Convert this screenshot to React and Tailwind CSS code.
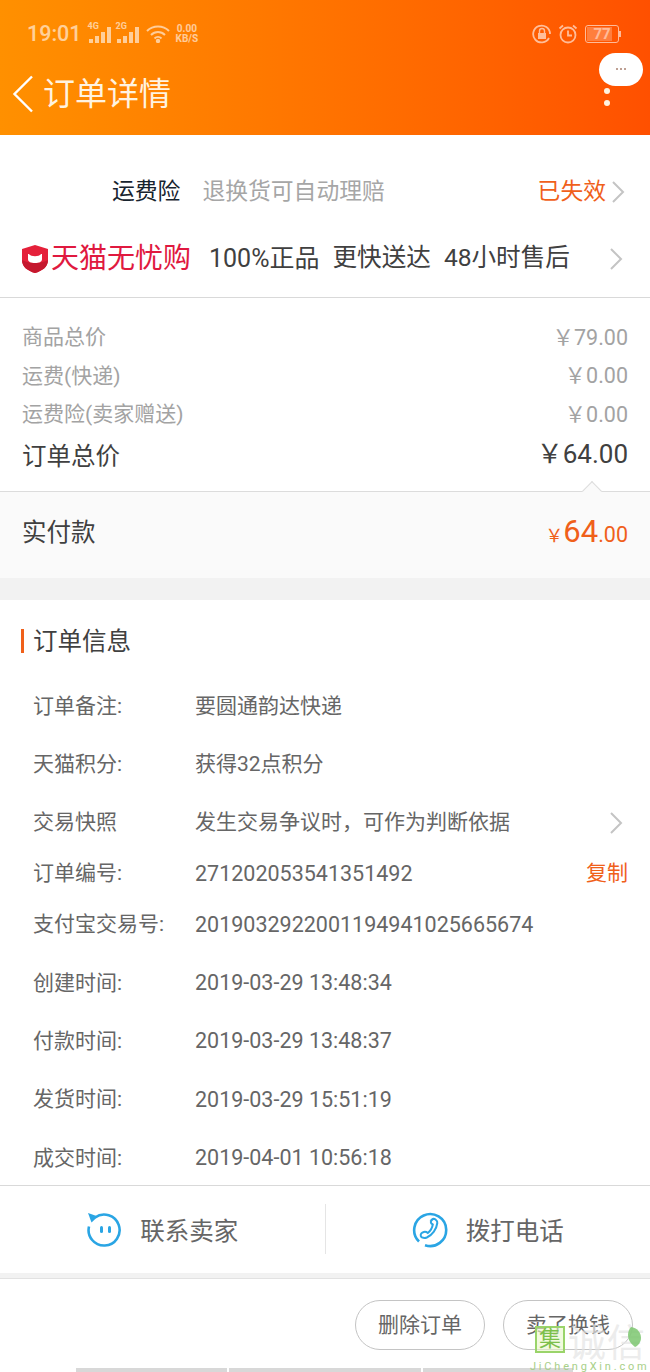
import React from 'react'

const font = { fontFamily: 'Roboto, "Noto Sans CJK SC", sans-serif' }

function Chevron ({ className = '' }) {
  return (
    <svg className={className} width="14" height="24" viewBox="0 0 14 24" fill="none" stroke="#c4c4c4" strokeWidth="2">
      <path d="M2 2l10 10L2 22" />
    </svg>
  )
}

function SignalBars ({ label }) {
  return (
    <div className="relative w-[24px] h-[20px] -mt-[3px] opacity-60">
      <span className="absolute left-0 top-[-2px] text-[9px] leading-[10px] font-bold text-white">{label}</span>
      <div className="absolute bottom-0 left-[1px] flex items-end gap-[2px]">
        <i className="block w-[4px] h-[4px] bg-white" />
        <i className="block w-[4px] h-[7px] bg-white" />
        <i className="block w-[4px] h-[11px] bg-white" />
        <i className="block w-[4px] h-[16px] bg-white" />
      </div>
    </div>
  )
}

function StatusBar () {
  return (
    <div className="flex items-center justify-between h-[34px] pl-[27px] pr-[29px] text-white">
      <div className="flex items-center">
        <span className="text-[21.5px] font-medium opacity-60 mr-[6px]">19:01</span>
        <SignalBars label="4G" />
        <span className="w-[4px]" />
        <SignalBars label="2G" />
        <svg className="ml-[6px] opacity-60" width="24" height="18" viewBox="0 0 24 18" fill="none" stroke="#fff" strokeWidth="2">
          <path d="M1 6c6-6 16-6 22 0" />
          <path d="M5 10c4-4 10-4 14 0" />
          <path d="M8.5 13.5c2-2 5-2 7 0" />
          <circle cx="12" cy="16" r="1.2" fill="#fff" />
        </svg>
        <div className="ml-[6px] flex flex-col items-center text-[10px] leading-[10px] font-bold opacity-60">
          <span>0.00</span>
          <span>KB/S</span>
        </div>
      </div>
      <div className="flex items-center">
        <svg className="opacity-60" width="20" height="20" viewBox="0 0 20 20" fill="none" stroke="#fff" strokeWidth="1.8">
          <path d="M17 14a8.4 8.4 0 1 1 1-4" />
          <rect x="6" y="9" width="8" height="6" fill="#fff" stroke="none" />
          <path d="M7.500 9V7a2.500 2.500 0 0 1 5 0v2" strokeWidth="1.4" />
        </svg>
        <svg className="ml-[6px] opacity-60" width="20" height="20" viewBox="0 0 20 20" fill="none" stroke="#fff" strokeWidth="1.8">
          <circle cx="10" cy="11" r="7.5" />
          <path d="M10 6.5V11.5H14" />
          <path d="M1.5 4.5L5 1.5M18.5 4.5L15 1.5" />
        </svg>
        <div className="ml-[7px] flex items-center opacity-60">
          <div className="relative w-[34px] h-[18px] rounded-[3px] border border-white text-center text-[15px] leading-[16px] font-bold">
            <i className="absolute left-[1px] top-[1px] bottom-[1px] w-[25px] bg-white/40" />
            <span className="relative">77</span>
          </div>
          <i className="block w-[2px] h-[6px] bg-white" />
        </div>
      </div>
    </div>
  )
}

function Header () {
  return (
    <div className="relative h-[135px] pt-[17px] bg-gradient-to-r from-[#ff9000] to-[#ff5000]">
      <StatusBar />
      <div className="flex items-center h-[64px] mt-[11px] pl-[12px] text-white">
        <svg width="22" height="38" viewBox="0 0 22 38" fill="none" stroke="#fff" strokeWidth="2.4">
          <path d="M20 1.5L2.500 19 20 36.5" />
        </svg>
        <span className="ml-[9px] text-[32px] text-[#fff3e0]">订单详情</span>
      </div>
      <div className="absolute right-[7px] top-[53px] w-[44px] h-[33px] rounded-full bg-white flex items-center justify-center gap-[2px] pb-[2px]">
        <i className="block w-[2px] h-[2px] rounded-full bg-[#a88070]" />
        <i className="block w-[2px] h-[2px] rounded-full bg-[#a88070]" />
        <i className="block w-[2px] h-[2px] rounded-full bg-[#a88070]" />
      </div>
      <div className="absolute left-[604px] top-[88px] flex flex-col gap-[6px]">
        <i className="block w-[6px] h-[6px] rounded-full bg-[#fff3e0]" />
        <i className="block w-[6px] h-[6px] rounded-full bg-[#fff3e0]" />
      </div>
    </div>
  )
}

function Shield () {
  return (
    <svg width="26" height="28" viewBox="0 0 26 28">
      <path d="M13 0l13 4v11c0 7-6 11-13 13C6 26 0 22 0 15V4z" fill="#e5203a" />
      <path d="M0 15c0 7 6 11 13 13 7-2 13-6 13-13-7 4-19 4-26 0z" fill="#c5182e" />
      <path d="M6 9h14v5c0 3-3 4-7 4s-7-1-7-4z" fill="#fff" />
      <path d="M7 9c2 3 10 3 12 0z" fill="#e5203a" />
    </svg>
  )
}

function Top () {
  return (
    <div className="bg-white border-b border-[#d9d9d9] pt-[40px] pb-[21px]">
      <div className="flex items-center h-[34px] pl-[112px] pr-[24px] text-[22.8px]">
        <span className="text-[#17232e]">运费险</span>
        <span className="ml-[22px] text-[#a6a6a6]">退换货可自动理赔</span>
        <span className="ml-auto text-[#f0601a]">已失效</span>
        <Chevron className="ml-[5px] mr-[1px]" />
      </div>
      <div className="flex items-center h-[34px] mt-[33px] pl-[22px] pr-[27px]">
        <Shield />
        <span className="ml-[3px] text-[28px] text-[#e0193f]">天猫无忧购</span>
        <div className="ml-[18px] flex gap-[13px] text-[24.6px] text-[#404040]">
          <span className="text-[25px]">100%正品</span>
          <span>更快送达</span>
          <span>48小时售后</span>
        </div>
        <Chevron className="ml-auto" />
      </div>
    </div>
  )
}

function PriceRow ({ label, value }) {
  return (
    <div className="flex items-center justify-between h-[38.5px] text-[21px] text-[#a3a3a3]">
      <span>{label}</span>
      <span className="text-[21.5px]">{value}</span>
    </div>
  )
}

function Totals () {
  return (
    <>
      <div className="relative bg-white px-[22px] pt-[20.5px] pb-[14px] border-b border-[#dcdcdc]">
        <PriceRow label="商品总价" value="￥79.00" />
        <PriceRow label="运费(快递)" value="￥0.00" />
        <PriceRow label="运费险(卖家赠送)" value="￥0.00" />
        <div className="flex items-center justify-between h-[41px] mt-[1.5px] text-[#404040]">
          <span className="text-[24.5px] mt-[2px]">订单总价</span>
          <span className="text-[26px] mb-[3px]">￥64.00</span>
        </div>
        <i className="absolute left-[585px] bottom-[-7px] block w-[14px] h-[14px] rotate-45 bg-[#fafafa] border-l border-t border-[#dcdcdc]" />
      </div>
      <div className="flex items-center justify-between h-[86px] pb-[2px] px-[22px] bg-[#fafafa]">
        <span className="text-[24.5px] text-[#404040]">实付款</span>
        <span className="text-[#f0601a] flex items-baseline text-[21.5px] mb-[3px]">
          <span className="text-[18px]">￥</span>
          <span className="text-[31px]">64</span>
          <span>.00</span>
        </span>
      </div>
      <div className="h-[22px] bg-[#f2f2f2]" />
    </>
  )
}

const infoRows = [
  ['订单备注:', '要圆通韵达快递', 58],
  ['天猫积分:', '获得32点积分', 58],
  ['交易快照', '发生交易争议时，可作为判断依据', 59],
  ['订单编号:', '271202053541351492', 43],
  ['支付宝交易号:', '2019032922001194941025665674', 59],
  ['创建时间:', '2019-03-29 13:48:34', 58],
  ['付款时间:', '2019-03-29 13:48:37', 58],
  ['发货时间:', '2019-03-29 15:51:19', 59],
  ['成交时间:', '2019-04-01 10:56:18', 58]
]

function Info () {
  return (
    <div className="bg-white h-[585px]">
      <div className="flex items-center h-[78px] pt-[8px] pl-[21px]">
        <i className="block w-[3px] h-[24px] mb-[4px] bg-[#f0601a]" />
        <span className="ml-[9px] text-[24.5px] text-[#404040]">订单信息</span>
      </div>
      {infoRows.map(([label, value, height], i) => (
        <div key={label} className="flex items-center pl-[33px] pr-[22px] text-[21px] text-[#666]" style={{ height }}>
          <span className="w-[162px] shrink-0">{label}</span>
          <span className={i > 2 ? 'text-[21.5px]' : ''}>{value}</span>
          {i === 2 && <Chevron className="ml-auto mr-[5px]" />}
          {i === 3 && <span className="ml-auto text-[#f0601a]">复制</span>}
        </div>
      ))}
    </div>
  )
}

function ContactBar () {
  return (
    <>
      <div className="relative flex items-center h-[88px] bg-white border-t border-[#d9d9d9]">
        <div className="flex-1 flex items-center justify-center gap-[18px] text-[24.5px] text-[#666]">
          <svg className="mt-[2px]" width="36" height="36" viewBox="0 0 36 36" fill="none" stroke="#2aa5e4" strokeWidth="2.6">
            <path d="M9 5.5a15.5 15.5 0 1 1-6 9" />
            <path d="M2 1l10 3.5-6.5 6z" fill="#2aa5e4" stroke="none" />
            <rect x="14" y="14" width="3" height="7" rx="1.5" fill="#2aa5e4" stroke="none" />
            <rect x="22" y="14" width="3" height="7" rx="1.5" fill="#2aa5e4" stroke="none" />
          </svg>
          <span className="mt-[6px]">联系卖家</span>
        </div>
        <i className="block w-px h-[50px] bg-[#e5e5e5]" />
        <div className="flex-1 flex items-center justify-center gap-[18px] text-[24.5px] text-[#666]">
          <svg className="mt-[2px]" width="36" height="36" viewBox="0 0 36 36" fill="none" stroke="#2aa5e4" strokeWidth="2.6">
            <path d="M7 29.5A16 16 0 1 1 13 33.2" />
            <path d="M20 7.5c1-1 2.5-.8 3.5 0s2 2 1.800 3.500c-.7 6-5 12-10.500 14.500-2 .8-5.500.5-6-1.500s1-3.500 3-4 3.200.3 4 1c2.500-2 4.500-5.500 5-8.500-1-.5-2-1.500-2-2.500s.8-1.700 1.700-2.500z" strokeWidth="2" />
          </svg>
          <span className="mt-[6px]">拨打电话</span>
        </div>
      </div>
      <div className="h-[6px] bg-[#f2f2f2] border-b border-[#e2e2e2]" />
    </>
  )
}

function Watermark () {
  return (
    <>
      <div className="absolute left-[535px] top-[47px] w-[30px] h-[27px] border-[2px] border-[#9ad46a] bg-[#e9f7c9]/60 flex items-center justify-center text-[22px] leading-none text-[#7cc04a]">集</div>
      <span className="absolute left-[568px] top-[45px] text-[38px] leading-none text-[#e4e4e4]/70 tracking-[1px]">诚信</span>
      <svg className="absolute left-[628px] top-[48px]" width="14" height="20" viewBox="0 0 14 20">
        <path d="M3 0c6 1 10 5 10 11 0 4-3 8-6 9C3 17 0 13 0 8c0-3 1-6 3-8z" fill="#7cc770" opacity=".85" />
      </svg>
      <span className="absolute left-[530px] top-[82px] text-[11px] leading-[11px] text-[#a8cf88] tracking-[2.800px]">JiChengXin.com</span>
    </>
  )
}

function Actions () {
  return (
    <div className="relative bg-white h-[93px]">
      <div className="flex justify-end gap-[18px] pt-[21px] pr-[17px]">
        <button className="w-[130px] h-[50px] pt-[3px] rounded-full border border-[#c4c4c4] text-[21px] text-[#666]">删除订单</button>
        <button className="w-[130px] h-[50px] pt-[3px] rounded-full border border-[#c4c4c4] text-[21px] text-[#666]">卖了换钱</button>
      </div>
      <div className="absolute left-[76px] bottom-0 flex gap-[2px]">
        <i className="block w-[151px] h-[4px] bg-[#d8d8d8]" />
        <i className="block w-[192px] h-[4px] bg-[#d8d8d8]" />
        <i className="block w-[150px] h-[4px] bg-[#d8d8d8]" />
      </div>
      <Watermark />
    </div>
  )
}

export default function App () {
  return (
    <div className="w-[650px] h-[1372px] overflow-hidden bg-white" style={font}>
      <Header />
      <Top />
      <Totals />
      <Info />
      <ContactBar />
      <Actions />
    </div>
  )
}
